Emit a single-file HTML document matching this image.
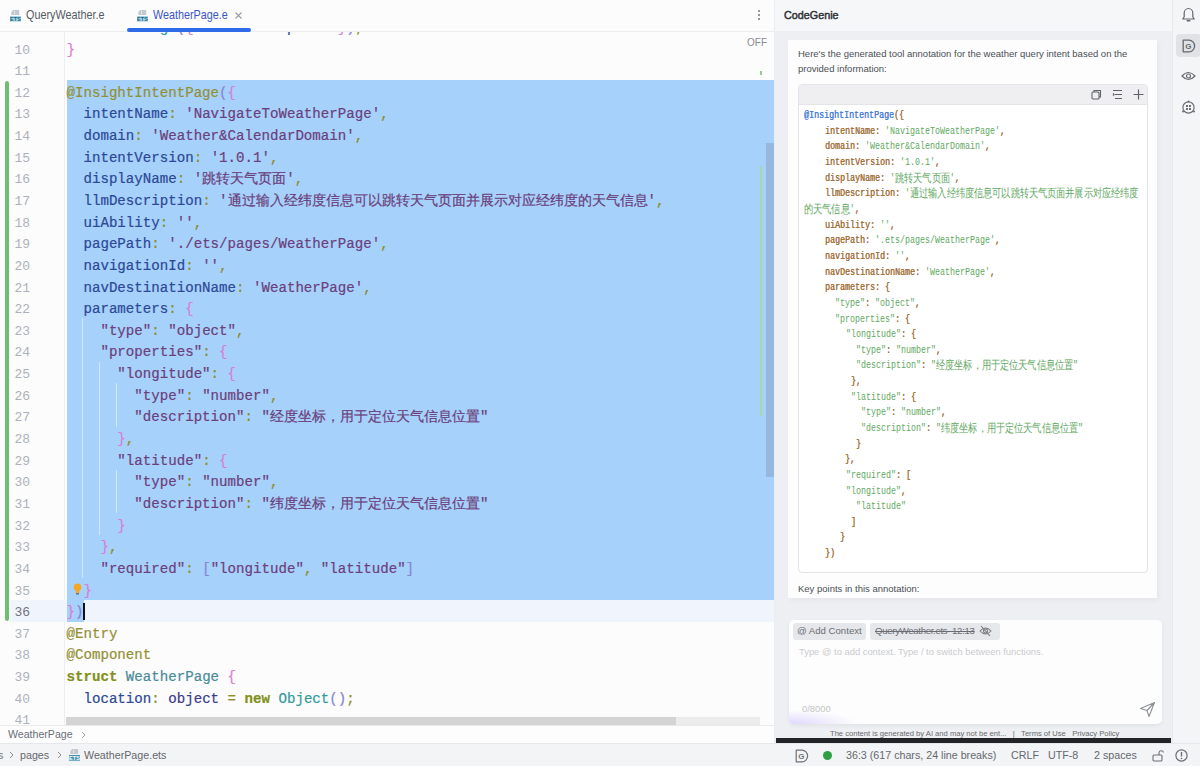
<!DOCTYPE html>
<html><head><meta charset="utf-8">
<style>
*{margin:0;padding:0;box-sizing:border-box}
html,body{width:1200px;height:766px;overflow:hidden;background:#fcfcfc;font-family:"Liberation Sans",sans-serif}
.abs{position:absolute}
#tabs{left:0;top:0;width:774px;height:32px;background:#fcfcfc;border-bottom:1px solid #ebecf0}
.tab{position:absolute;top:9px;font-size:10.8px;color:#555a62;white-space:nowrap;transform-origin:0 50%;transform:scaleY(1.1)}
#editor{left:0;top:32px;width:774px;height:693px;background:#fcfcfd;overflow:hidden}
#gutter{left:0;top:0;width:65px;height:693px;border-right:1px solid #eceef2}
.ln{position:absolute;left:0;width:30px;text-align:right;font-size:13px;color:#aeb1b8;font-family:"Liberation Mono",monospace}
.code{position:absolute;left:66.5px;white-space:pre;font-family:"Liberation Mono",monospace;font-size:14.13px;line-height:21.64px;height:21.64px;padding-top:2.5px;-webkit-text-stroke:0.2px currentColor}
.an{color:#939033}.kw{color:#82901a;font-weight:bold}.pr{color:#2c4896}.st{color:#6b3f7c}.pu{color:#8e8d2a}.p1{color:#8a84d4}.p2{color:#d97fd2}.ty{color:#3b3b8c}.cl{color:#4a8a96}.ob{color:#319a9a}
.cjk{letter-spacing:0}
#sel{left:66.5px;top:48.3px;width:707.5px;height:519.4px;background:#a6d1fb}
#right{left:774px;top:0;width:398px;height:743px;background:#eeeff2;border-left:1px solid #ebecef}
#rhead{left:0;top:0;width:397px;height:31px;background:#f6f7f9}
#rtitle{left:9px;top:9px;font-size:10.8px;font-weight:normal;color:#2e3035;-webkit-text-stroke:0.45px #2e3035;letter-spacing:0}
#card{left:13px;top:40px;width:369px;height:558px;background:#fdfdfd;box-shadow:2px 3px 5px rgba(0,0,0,0.035)}
.ptxt{position:absolute;left:10px;font-size:9.5px;color:#4c4f55;white-space:nowrap}
#cb{left:10px;top:44px;width:350px;height:489px;background:#fff;border:1px solid #e3e4e8;border-radius:4px;overflow:hidden}
#cbh{left:0;top:0;width:348px;height:20px;background:#efeff1;border-bottom:1px solid #e3e4e8}
.rc{position:absolute;white-space:pre;font-family:"Liberation Mono",monospace;font-size:10.8px;letter-spacing:0;color:#a4733c;line-height:15.64px;transform-origin:0 50%;transform:scaleX(0.772);text-shadow:0.35px 0 0 currentColor}
.rs{color:#62a862;text-shadow:none}.rb{color:#4a7fd8}
.rcj{font-size:11.8px;letter-spacing:-0.17px;text-shadow:none;vertical-align:-0.5px}
#side{left:1172px;top:0;width:28px;height:743px;background:#f4f5f7;border-left:1px solid #e8e9ec}
#status{left:0;top:743px;width:1200px;height:23px;background:#f3f4f6;border-top:1px solid #e6e7ea}
.sb{position:absolute;top:5px;font-size:10.7px;color:#65686e;white-space:nowrap}
</style></head><body>
<div id="tabs" class="abs">

<svg class="abs" style="left:10px;top:10px" width="11" height="12" viewBox="0 0 11 12"><path d="M3.2 0H9.2V5H1.3V2Z" fill="#c3c9cf"/><path d="M4.5 0.8V4.3" stroke="#e9edf0" stroke-width="0.8"/><rect x="0" y="6" width="11" height="5.7" fill="#9fd6ee"/><text x="5.5" y="10.9" font-size="5.6" font-family="Liberation Sans" font-weight="bold" fill="#2f5f70" text-anchor="middle">ETS</text></svg>
<div class="tab" style="left:26px">QueryWeather.e</div>
<svg class="abs" style="left:137px;top:10px" width="11" height="12" viewBox="0 0 11 12"><path d="M3.2 0H9.2V5H1.3V2Z" fill="#c3c9cf"/><path d="M4.5 0.8V4.3" stroke="#e9edf0" stroke-width="0.8"/><rect x="0" y="6" width="11" height="5.7" fill="#9fd6ee"/><text x="5.5" y="10.9" font-size="5.6" font-family="Liberation Sans" font-weight="bold" fill="#2f5f70" text-anchor="middle">ETS</text></svg>
<div class="tab" style="left:153px;color:#3b55c9">WeatherPage.e</div>
<svg class="abs" style="left:235px;top:12px" width="7" height="7" viewBox="0 0 7 7"><path d="M0.5 0.5L6.5 6.5M6.5 0.5L0.5 6.5" stroke="#9a9da3" stroke-width="1.1"/></svg>
<div class="abs" style="left:127px;top:28px;width:124px;height:3.6px;border-radius:2px;background:#2f6ae8"></div>
<div class="abs" style="left:758px;top:10px;width:2px;height:2px;border-radius:1px;background:#777;box-shadow:0 4px 0 #777,0 8px 0 #777"></div>

</div>
<div id="editor" class="abs">
  <div id="gutter" class="abs"></div>
  <div id="sel" class="abs"></div>

  <div class="abs" style="left:10px;top:568px;width:764px;height:21.64px;background:#f0f4fc"></div>
  <div class="abs" style="left:66.5px;top:568px;width:17px;height:21.64px;background:#a6d1fb"></div>
  <div class="abs" style="left:5px;top:49px;width:4px;height:540px;border-radius:2px;background:#6fbf73"></div>
  <div class="abs" style="left:81.5px;top:286.3px;width:1px;height:259.7px;background:#d2e6fb"></div>
  <div class="abs" style="left:98.5px;top:329.6px;width:1px;height:173.5px;background:#d2e6fb"></div>
  <div class="abs" style="left:115.5px;top:351.3px;width:1px;height:43.3px;background:#d2e6fb"></div>
  <div class="abs" style="left:115.5px;top:437.9px;width:1px;height:43.3px;background:#d2e6fb"></div>
  <div class="abs" style="left:766px;top:111px;width:8px;height:334px;background:#97b8de"></div>
  <div class="abs" style="left:760px;top:134px;width:1.5px;height:250px;background:#a6d9a4"></div>
  <div class="abs" style="left:760px;top:39px;width:2px;height:4px;background:#8fd08a"></div>
  <div class="abs" style="left:747px;top:5px;font-size:10px;color:#8a8d92">OFF</div>
  <div class="abs" style="left:66px;top:685px;width:610px;height:8px;background:#d4d4d4"></div>
  <div class="abs" style="left:676px;top:685px;width:84px;height:8px;background:#ececec"></div>
<div class="ln" style="top:-11.12px">9</div>
<div class="code" style="top:-16.62px">           <span class="ob">g</span> <span class="p1">(</span><span class="p2">{</span>           <span class="pr">p</span>     <span class="p2">}</span><span class="p1">)</span><span class="pu">;</span></div>
<div class="ln" style="top:10.52px">10</div>
<div class="code" style="top:5.02px"><span class="p2">}</span></div>
<div class="ln" style="top:32.16px">11</div>
<div class="ln" style="top:53.80px">12</div>
<div class="code" style="top:48.30px"><span class="an">@InsightIntentPage</span><span class="p1">(</span><span class="p2">{</span></div>
<div class="ln" style="top:75.44px">13</div>
<div class="code" style="top:69.94px">  <span class="pr">intentName</span><span class="pu">:</span> <span class="st">&#x27;NavigateToWeatherPage&#x27;</span><span class="pu">,</span></div>
<div class="ln" style="top:97.08px">14</div>
<div class="code" style="top:91.58px">  <span class="pr">domain</span><span class="pu">:</span> <span class="st">&#x27;Weather&amp;CalendarDomain&#x27;</span><span class="pu">,</span></div>
<div class="ln" style="top:118.72px">15</div>
<div class="code" style="top:113.22px">  <span class="pr">intentVersion</span><span class="pu">:</span> <span class="st">&#x27;1.0.1&#x27;</span><span class="pu">,</span></div>
<div class="ln" style="top:140.36px">16</div>
<div class="code" style="top:134.86px">  <span class="pr">displayName</span><span class="pu">:</span> <span class="st">&#x27;<span class="cjk">跳转天气页面</span>&#x27;</span><span class="pu">,</span></div>
<div class="ln" style="top:162.00px">17</div>
<div class="code" style="top:156.50px">  <span class="pr">llmDescription</span><span class="pu">:</span> <span class="st">&#x27;<span class="cjk">通过输入经纬度信息可以跳转天气页面并展示对应经纬度的天气信息</span>&#x27;</span><span class="pu">,</span></div>
<div class="ln" style="top:183.64px">18</div>
<div class="code" style="top:178.14px">  <span class="pr">uiAbility</span><span class="pu">:</span> <span class="st">&#x27;&#x27;</span><span class="pu">,</span></div>
<div class="ln" style="top:205.28px">19</div>
<div class="code" style="top:199.78px">  <span class="pr">pagePath</span><span class="pu">:</span> <span class="st">&#x27;./ets/pages/WeatherPage&#x27;</span><span class="pu">,</span></div>
<div class="ln" style="top:226.92px">20</div>
<div class="code" style="top:221.42px">  <span class="pr">navigationId</span><span class="pu">:</span> <span class="st">&#x27;&#x27;</span><span class="pu">,</span></div>
<div class="ln" style="top:248.56px">21</div>
<div class="code" style="top:243.06px">  <span class="pr">navDestinationName</span><span class="pu">:</span> <span class="st">&#x27;WeatherPage&#x27;</span><span class="pu">,</span></div>
<div class="ln" style="top:270.20px">22</div>
<div class="code" style="top:264.70px">  <span class="pr">parameters</span><span class="pu">:</span> <span class="p2">{</span></div>
<div class="ln" style="top:291.84px">23</div>
<div class="code" style="top:286.34px">    <span class="st">&quot;type&quot;</span><span class="pu">:</span> <span class="st">&quot;object&quot;</span><span class="pu">,</span></div>
<div class="ln" style="top:313.48px">24</div>
<div class="code" style="top:307.98px">    <span class="st">&quot;properties&quot;</span><span class="pu">:</span> <span class="p2">{</span></div>
<div class="ln" style="top:335.12px">25</div>
<div class="code" style="top:329.62px">      <span class="st">&quot;longitude&quot;</span><span class="pu">:</span> <span class="p2">{</span></div>
<div class="ln" style="top:356.76px">26</div>
<div class="code" style="top:351.26px">        <span class="st">&quot;type&quot;</span><span class="pu">:</span> <span class="st">&quot;number&quot;</span><span class="pu">,</span></div>
<div class="ln" style="top:378.40px">27</div>
<div class="code" style="top:372.90px">        <span class="st">&quot;description&quot;</span><span class="pu">:</span> <span class="st">&quot;<span class="cjk">经度坐标，用于定位天气信息位置</span>&quot;</span></div>
<div class="ln" style="top:400.04px">28</div>
<div class="code" style="top:394.54px">      <span class="p2">}</span><span class="pu">,</span></div>
<div class="ln" style="top:421.68px">29</div>
<div class="code" style="top:416.18px">      <span class="st">&quot;latitude&quot;</span><span class="pu">:</span> <span class="p2">{</span></div>
<div class="ln" style="top:443.32px">30</div>
<div class="code" style="top:437.82px">        <span class="st">&quot;type&quot;</span><span class="pu">:</span> <span class="st">&quot;number&quot;</span><span class="pu">,</span></div>
<div class="ln" style="top:464.96px">31</div>
<div class="code" style="top:459.46px">        <span class="st">&quot;description&quot;</span><span class="pu">:</span> <span class="st">&quot;<span class="cjk">纬度坐标，用于定位天气信息位置</span>&quot;</span></div>
<div class="ln" style="top:486.60px">32</div>
<div class="code" style="top:481.10px">      <span class="p2">}</span></div>
<div class="ln" style="top:508.24px">33</div>
<div class="code" style="top:502.74px">    <span class="p2">}</span><span class="pu">,</span></div>
<div class="ln" style="top:529.88px">34</div>
<div class="code" style="top:524.38px">    <span class="st">&quot;required&quot;</span><span class="pu">:</span> <span class="p1">[</span><span class="st">&quot;longitude&quot;</span><span class="pu">,</span> <span class="st">&quot;latitude&quot;</span><span class="p1">]</span></div>
<div class="ln" style="top:551.52px">35</div>
<div class="code" style="top:546.02px">  <span class="p2">}</span></div>
<div class="ln" style="top:573.16px;color:#6f737a">36</div>
<div class="code" style="top:567.66px"><span class="p2">}</span><span class="p1">)</span></div>
<div class="ln" style="top:594.80px">37</div>
<div class="code" style="top:589.30px"><span class="an">@Entry</span></div>
<div class="ln" style="top:616.44px">38</div>
<div class="code" style="top:610.94px"><span class="an">@Component</span></div>
<div class="ln" style="top:638.08px">39</div>
<div class="code" style="top:632.58px"><span class="kw">struct</span> <span class="cl">WeatherPage</span> <span class="p2">{</span></div>
<div class="ln" style="top:659.72px">40</div>
<div class="code" style="top:654.22px">  <span class="pr">location</span><span class="pu">:</span> <span class="ty">object</span> <span class="pu">=</span> <span class="kw">new</span> <span class="ob">Object</span><span class="p1">()</span><span class="pu">;</span></div>
<div class="ln" style="top:681.36px">41</div>
  <div class="abs" style="left:83px;top:571px;width:2px;height:17px;background:#111"></div>
  <svg class="abs" style="left:73px;top:551px" width="9" height="12" viewBox="0 0 9 12"><circle cx="4.5" cy="4.2" r="3.8" fill="#f5a623"/><rect x="2.8" y="7.5" width="3.4" height="3" fill="#f5a623"/><rect x="3" y="10" width="3" height="1.6" fill="#6b7a8f"/></svg>

</div>

<div class="abs" style="left:0;top:725px;width:774px;height:18px;background:#fdfdfd;border-top:1px solid #e9eaee">
  <div class="abs" style="left:8px;top:2px;font-size:10.6px;color:#6a6e75">WeatherPage</div>
  <svg class="abs" style="left:81px;top:5px" width="5" height="8" viewBox="0 0 5 8"><path d="M1 1L4 4L1 7" fill="none" stroke="#a0a3a8" stroke-width="1"/></svg>
</div>
<div id="right" class="abs">
  <div id="rhead" class="abs"><div id="rtitle" class="abs">CodeGenie</div></div>
  <div id="card" class="abs">
    <div class="ptxt" style="top:7.5px">Here's the generated tool annotation for the weather query intent based on the</div>
    <div class="ptxt" style="top:22.5px">provided information:</div>
    <div id="cb" class="abs"><div id="cbh" class="abs">
<svg class="abs" style="left:292px;top:4px" width="11" height="11" viewBox="0 0 11 11"><rect x="1" y="3" width="7" height="7" rx="1" fill="none" stroke="#5f6268" stroke-width="1.1"/><path d="M3 3V1.5H9.5V8H8" fill="none" stroke="#5f6268" stroke-width="1.1"/></svg>
<svg class="abs" style="left:313px;top:4px" width="11" height="11" viewBox="0 0 11 11"><path d="M1 1.5H10M3 5.5H10M3 9.5H10M1 4.5L2 5.5L1 6.5" fill="none" stroke="#5f6268" stroke-width="1.2"/></svg>
<svg class="abs" style="left:334px;top:4px" width="11" height="11" viewBox="0 0 11 11"><path d="M5.5 0.5V10.5M0.5 5.5H10.5" fill="none" stroke="#5f6268" stroke-width="1.2"/></svg>
</div>
<div class="rc" style="left:5.2px;top:23.18px"><span class="rb">@InsightIntentPage</span>({</div>
<div class="rc" style="left:26.0px;top:38.82px">intentName: <span class="rs">&#x27;NavigateToWeatherPage&#x27;</span>,</div>
<div class="rc" style="left:26.0px;top:54.46px">domain: <span class="rs">&#x27;Weather&amp;CalendarDomain&#x27;</span>,</div>
<div class="rc" style="left:26.0px;top:70.10px">intentVersion: <span class="rs">&#x27;1.0.1&#x27;</span>,</div>
<div class="rc" style="left:26.0px;top:85.74px">displayName: <span class="rs">&#x27;<span class="rcj">跳转天气页面</span>&#x27;</span>,</div>
<div class="rc" style="left:26.0px;top:101.38px">llmDescription: <span class="rs">&#x27;<span class="rcj">通过输入经纬度信息可以跳转天气页面并展示对应经纬度</span></span></div>
<div class="rc" style="left:5.2px;top:117.02px"><span class="rs"><span class="rcj">的天气信息</span>&#x27;</span>,</div>
<div class="rc" style="left:26.0px;top:132.66px">uiAbility: <span class="rs">&#x27;&#x27;</span>,</div>
<div class="rc" style="left:26.0px;top:148.30px">pagePath: <span class="rs">&#x27;.ets/pages/WeatherPage&#x27;</span>,</div>
<div class="rc" style="left:26.0px;top:163.94px">navigationId: <span class="rs">&#x27;&#x27;</span>,</div>
<div class="rc" style="left:26.0px;top:179.58px">navDestinationName: <span class="rs">&#x27;WeatherPage&#x27;</span>,</div>
<div class="rc" style="left:26.0px;top:195.22px">parameters: {</div>
<div class="rc" style="left:36.4px;top:210.86px"><span class="rs">&quot;type&quot;</span>: <span class="rs">&quot;object&quot;</span>,</div>
<div class="rc" style="left:36.4px;top:226.50px"><span class="rs">&quot;properties&quot;</span>: {</div>
<div class="rc" style="left:46.5px;top:242.14px"><span class="rs">&quot;longitude&quot;</span>: {</div>
<div class="rc" style="left:56.5px;top:257.78px"><span class="rs">&quot;type&quot;</span>: <span class="rs">&quot;number&quot;</span>,</div>
<div class="rc" style="left:56.5px;top:273.42px"><span class="rs">&quot;description&quot;</span>: <span class="rs">&quot;<span class="rcj">经度坐标，用于定位天气信息位置</span>&quot;</span></div>
<div class="rc" style="left:52.0px;top:289.06px">},</div>
<div class="rc" style="left:51.6px;top:304.70px"><span class="rs">&quot;latitude&quot;</span>: {</div>
<div class="rc" style="left:61.5px;top:320.34px"><span class="rs">&quot;type&quot;</span>: <span class="rs">&quot;number&quot;</span>,</div>
<div class="rc" style="left:61.5px;top:335.98px"><span class="rs">&quot;description&quot;</span>: <span class="rs">&quot;<span class="rcj">纬度坐标，用于定位天气信息位置</span>&quot;</span></div>
<div class="rc" style="left:56.5px;top:351.62px">}</div>
<div class="rc" style="left:46.1px;top:367.26px">},</div>
<div class="rc" style="left:46.5px;top:382.90px"><span class="rs">&quot;required&quot;</span>: [</div>
<div class="rc" style="left:46.5px;top:398.54px"><span class="rs">&quot;longitude&quot;</span>,</div>
<div class="rc" style="left:56.5px;top:414.18px"><span class="rs">&quot;latitude&quot;</span></div>
<div class="rc" style="left:51.6px;top:429.82px">]</div>
<div class="rc" style="left:41.4px;top:445.46px">}</div>
<div class="rc" style="left:26.4px;top:461.10px">})</div>
    </div>
    <div class="ptxt" style="top:543px">Key points in this annotation:</div>
  </div>

  <div class="abs" style="left:14px;top:619.5px;width:373px;height:104px;background:#fdfdfd radial-gradient(ellipse 70px 14px at 0% 100%, rgba(200,185,255,0.55), rgba(220,210,255,0) 100%);border-radius:5px;box-shadow:0 2px 4px rgba(0,0,0,0.05)"></div>
  <div class="abs" style="left:18px;top:623px;width:73px;height:17px;background:#e6e7ea;border-radius:3px"></div>
  <div class="abs" style="left:22px;top:625px;font-size:9.6px;color:#6a6d73">@ Add Context</div>
  <div class="abs" style="left:95px;top:623px;width:130px;height:17px;background:#e6e7ea;border-radius:3px"></div>
  <div class="abs" style="left:100px;top:625px;font-size:9.6px;color:#6a6d73;text-decoration:line-through;letter-spacing:-0.3px">QueryWeather.ets&nbsp; 12:13</div>
  <svg class="abs" style="left:204px;top:625px" width="13" height="12" viewBox="0 0 13 12"><path d="M1 6Q6.5 0 12 6Q6.5 12 1 6Z" fill="none" stroke="#7a7d83" stroke-width="1.1"/><circle cx="6.5" cy="6" r="2" fill="none" stroke="#7a7d83" stroke-width="1.1"/><path d="M2 1L11 11" stroke="#7a7d83" stroke-width="1.1"/></svg>
  <div class="abs" style="left:24px;top:646px;font-size:9.4px;color:#cacbcf;white-space:nowrap">Type @ to add context. Type / to switch between functions.</div>
  <div class="abs" style="left:27px;top:703px;font-size:9.4px;color:#c3c5c9">0/8000</div>
  <svg class="abs" style="left:364px;top:701px" width="17" height="17" viewBox="0 0 17 17"><path d="M1.5 7.5L15.5 1.5L10 15.5L8 9.5Z M8 9.5L15.5 1.5" fill="none" stroke="#8e9196" stroke-width="1.1" stroke-linejoin="round"/></svg>
  <div class="abs" style="left:55px;top:729px;font-size:7.6px;color:#66696e;white-space:nowrap">The content is generated by AI and may not be ent...&nbsp;&nbsp;&nbsp;|&nbsp;&nbsp;&nbsp;Terms of Use&nbsp;&nbsp; Privacy Policy</div>
  <div class="abs" style="left:1px;top:737.5px;width:395px;height:5px;background:#222428"></div>

</div>
<div id="side" class="abs">

  <svg class="abs" style="left:8px;top:7px" width="15" height="16" viewBox="0 0 15 16"><path d="M1.8 12H13.2L11.8 9.8V6A4.3 4.5 0 0 0 3.2 6V9.8Z" fill="none" stroke="#64676d" stroke-width="1.2" stroke-linejoin="round"/><path d="M6.2 13.8H8.8" stroke="#64676d" stroke-width="1.4" stroke-linecap="round"/></svg>
  <div class="abs" style="left:3px;top:34px;width:25px;height:23px;background:#e1e2e5;border-radius:4px"></div>
  <svg class="abs" style="left:9px;top:38.5px" width="14" height="14" viewBox="0 0 14 14"><path d="M1.2 1.2H7A5.6 5.8 0 0 1 7 12.8H1.2Z" fill="none" stroke="#64676d" stroke-width="1.3" stroke-linejoin="round"/><text x="6.4" y="10.2" font-size="8" font-weight="bold" font-family="Liberation Sans" fill="#64676d" text-anchor="middle">G</text></svg>
  <svg class="abs" style="left:8px;top:70px" width="15" height="12" viewBox="0 0 15 12"><path d="M1 6Q7.5 -1 14 6Q7.5 13 1 6Z" fill="none" stroke="#6b6e74" stroke-width="1.2"/><circle cx="7.5" cy="6" r="2" fill="none" stroke="#6b6e74" stroke-width="1.2"/></svg>
  <svg class="abs" style="left:8px;top:100px" width="15" height="15" viewBox="0 0 15 15"><circle cx="7.5" cy="7.5" r="5.6" fill="none" stroke="#6b6e74" stroke-width="1.2"/><rect x="5" y="5" width="2" height="2" fill="#6b6e74"/><rect x="8" y="5" width="2" height="2" fill="#6b6e74"/><rect x="5" y="8" width="2" height="2" fill="#6b6e74"/><rect x="8" y="8" width="2" height="2" fill="#6b6e74"/><circle cx="7.5" cy="1.5" r="1" fill="#6b6e74"/><circle cx="2" cy="11.5" r="1" fill="#6b6e74"/><circle cx="13" cy="11.5" r="1" fill="#6b6e74"/></svg>

</div>
<div id="status" class="abs">

  <div class="sb" style="left:-2px;color:#777">s</div><svg class="abs" style="left:9px;top:7px" width="5" height="8" viewBox="0 0 5 8"><path d="M1 1L4 4L1 7" fill="none" stroke="#8a8d92" stroke-width="1"/></svg>
  <div class="sb" style="left:20px">pages</div>
  <svg class="abs" style="left:57px;top:7px" width="5" height="8" viewBox="0 0 5 8"><path d="M1 1L4 4L1 7" fill="none" stroke="#8a8d92" stroke-width="1"/></svg>
  <svg class="abs" style="left:69px;top:5px" width="11" height="12" viewBox="0 0 11 12"><path d="M3.2 0H9.2V5H1.3V2Z" fill="#c3c9cf"/><path d="M4.5 0.8V4.3" stroke="#e9edf0" stroke-width="0.8"/><rect x="0" y="6" width="11" height="5.7" fill="#3f8fb0"/><text x="5.5" y="10.9" font-size="5.6" font-family="Liberation Sans" font-weight="bold" fill="#fff" text-anchor="middle">ETS</text></svg>
  <div class="sb" style="left:84px">WeatherPage.ets</div>
  <svg class="abs" style="left:795px;top:5px" width="14" height="14" viewBox="0 0 14 14"><path d="M1.2 1.2H7A5.6 5.8 0 0 1 7 12.8H1.2Z" fill="none" stroke="#6e7177" stroke-width="1.2" stroke-linejoin="round"/><text x="6.4" y="10.2" font-size="8" font-weight="bold" font-family="Liberation Sans" fill="#6e7177" text-anchor="middle">G</text></svg>
  <div class="abs" style="left:823px;top:7px;width:9px;height:9px;border-radius:50%;background:#2ea043"></div>
  <div class="sb" style="left:846px">36:3 (617 chars, 24 line breaks)</div>
  <div class="sb" style="left:1011px">CRLF</div>
  <div class="sb" style="left:1048px">UTF-8</div>
  <div class="sb" style="left:1094px">2 spaces</div>
  <svg class="abs" style="left:1152px;top:5px" width="12" height="13" viewBox="0 0 12 13"><rect x="1" y="6" width="9" height="6" rx="1" fill="none" stroke="#6b6e74" stroke-width="1.1"/><path d="M7 6V3.5A2.3 2.3 0 0 1 11.5 3.5" fill="none" stroke="#6b6e74" stroke-width="1.1"/></svg>
  <svg class="abs" style="left:1175px;top:5px" width="13" height="13" viewBox="0 0 13 13"><circle cx="6.5" cy="6.5" r="5.6" fill="none" stroke="#6b6e74" stroke-width="1.2"/><path d="M6.5 3V7.5" stroke="#6b6e74" stroke-width="1.4"/><circle cx="6.5" cy="9.5" r="0.8" fill="#6b6e74"/></svg>

</div>
</body></html>
